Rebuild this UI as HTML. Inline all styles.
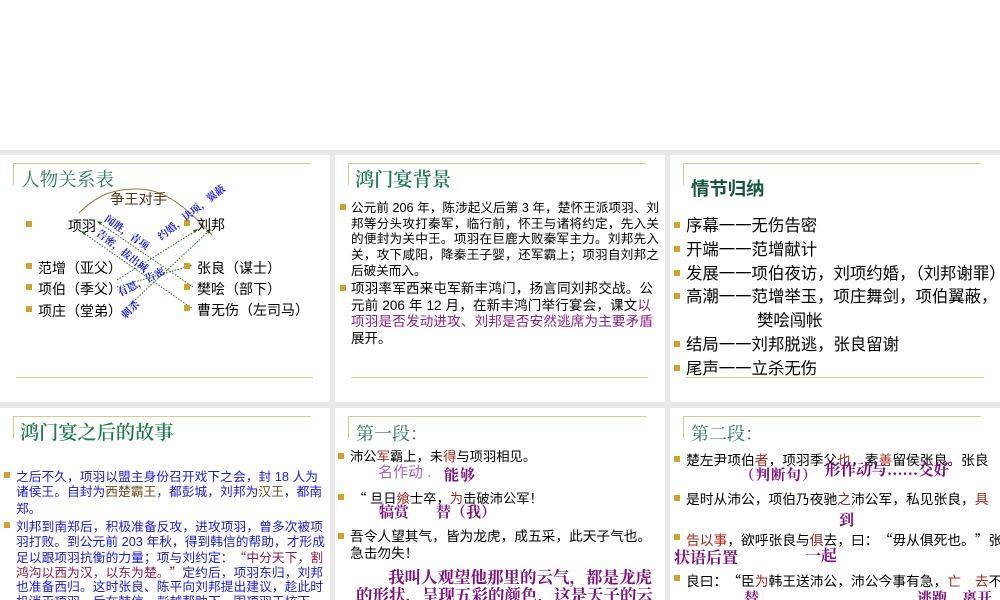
<!DOCTYPE html>
<html lang="zh"><head><meta charset="utf-8">
<style>
html,body{margin:0;padding:0;background:#fff}
#p{position:relative;width:1000px;height:600px;overflow:hidden;background:#fff;font-family:"Liberation Sans","Noto Sans CJK SC",sans-serif;color:#000}
.bg{position:absolute;left:0;top:150px;width:1000px;height:450px;background:#e8e8e8}
.s{position:absolute;background:#fff}
.l{position:absolute;background:#dcc688}
.b{position:absolute;width:6px;height:6px;background:#c9a42e}
.t{position:absolute;height:20px;line-height:20px;white-space:nowrap;margin-top:1px}
.j{text-align:justify;text-align-last:justify;white-space:normal;overflow:hidden}
.q{font-family:"Noto Sans CJK SC",sans-serif}
.ql{display:inline-block;width:1em;text-align:right;text-align-last:right;font-family:"Noto Sans CJK SC",sans-serif}
.qr{display:inline-block;width:1em;text-align:left;text-align-last:left;font-family:"Noto Sans CJK SC",sans-serif}
.h{font-family:"Liberation Serif","Noto Serif CJK SC",serif;color:#2d7d5c;font-size:18.6px;margin-top:2px}
.g{font-family:"Liberation Serif","Noto Serif CJK SC",serif;color:#1c7a4e;font-weight:600;font-size:19.2px;margin-top:2px}
.k{font-family:"Liberation Serif","Noto Serif CJK SC",serif;color:#7d0f80;font-weight:700;font-size:15px;margin-top:2px}
.r{color:#a52a20}.m{color:#8b1a4a}.n{color:#6b4a1e}.pu{color:#8a1f8a}
.a{font-size:14px}.d{font-size:16.4px}.c{font-size:13.4px}
.u{color:#1a1ad0;font-size:12.7px}
.o{position:absolute;font-family:"Liberation Serif","Noto Serif CJK SC",serif;font-size:10.3px;font-weight:700;color:#1c1cd8;white-space:nowrap;line-height:12px;transform-origin:0 50%}
#w{position:absolute;left:0;top:0;width:1000px;height:600px;filter:blur(.3px)}
</style></head><body><div id="p"><div class="bg"></div>
<div id="w">
<div class="s" style="left:0;top:155px;width:330px;height:247px"></div>
<div class="s" style="left:335px;top:155px;width:330px;height:247px"></div>
<div class="s" style="left:670px;top:155px;width:330px;height:247px"></div>
<div class="s" style="left:0;top:408px;width:330px;height:192px"></div>
<div class="s" style="left:335px;top:408px;width:330px;height:192px"></div>
<div class="s" style="left:670px;top:408px;width:330px;height:192px"></div>

<div class="l" style="left:13px;top:163px;width:298px;height:1px"></div><div class="l" style="left:13px;top:163px;width:1px;height:22px"></div><div class="l" style="left:16px;top:377px;width:297px;height:1px"></div>
<div class="l" style="left:348px;top:163px;width:298px;height:1px"></div><div class="l" style="left:348px;top:163px;width:1px;height:22px"></div><div class="l" style="left:351px;top:377px;width:297px;height:1px"></div>
<div class="l" style="left:683px;top:163px;width:298px;height:1px"></div><div class="l" style="left:683px;top:163px;width:1px;height:22px"></div><div class="l" style="left:686px;top:377px;width:298px;height:1px"></div>
<div class="l" style="left:13px;top:416px;width:298px;height:1px"></div><div class="l" style="left:13px;top:416px;width:1px;height:22px"></div>
<div class="l" style="left:348px;top:416px;width:298px;height:1px"></div><div class="l" style="left:348px;top:416px;width:1px;height:22px"></div>
<div class="l" style="left:683px;top:416px;width:298px;height:1px"></div><div class="l" style="left:683px;top:416px;width:1px;height:22px"></div>

<!-- slide 1 -->
<div class="t h" style="left:21px;top:169px">人物关系表</div>
<svg style="position:absolute;left:0;top:150px" width="335" height="255" fill="none">
<path d="M79 63C100 42 118 39 137 39C160 39 180 50 212 85" stroke="#9a7436" stroke-width="1"/>
<g stroke="#2b6d2b" stroke-width="1" stroke-dasharray="1.6 1.4">
<path d="M98 72L193 137"/><path d="M82 82L193 159"/><path d="M117 130L197 80"/><path d="M117 137L190 116"/><path d="M122 162L210 80"/>
</g>
<g fill="#1d611d"><path d="M97 71l5 1-2 3z"/><path d="M81 81l5 1-2 3z"/><path d="M198 79l-5 1 2 3z"/><path d="M192 115l-5-1 1 4z"/><path d="M211 79l-5 2 3 3z"/></g>
</svg>
<div class="t" style="left:110px;top:189px;font-size:14.3px;color:#4e3410">争王对手</div>
<div class="b" style="left:26px;top:221px"></div><div class="b" style="left:26px;top:263px"></div><div class="b" style="left:26px;top:284px"></div><div class="b" style="left:26px;top:306px"></div>
<div class="b" style="left:184px;top:220px"></div><div class="b" style="left:184px;top:263px"></div><div class="b" style="left:184px;top:284px"></div><div class="b" style="left:184px;top:305px"></div>
<div class="t a" style="left:68px;top:215px">项羽</div>
<div class="t a" style="left:38px;top:257px">范增（亚父）</div>
<div class="t a" style="left:38px;top:278px">项伯（季父）</div>
<div class="t a" style="left:38px;top:300px">项庄（堂弟）</div>
<div class="t a" style="left:197px;top:214px">刘邦</div>
<div class="t a" style="left:197px;top:257px">张良（谋士）</div>
<div class="t a" style="left:197px;top:278px">樊哙（部下）</div>
<div class="t a" style="left:197px;top:299px">曹无伤（左司马）</div>
<div class="o" style="left:105px;top:213px;transform:rotate(35deg)">闻胜，青项</div>
<div class="o" style="left:97px;top:227px;transform:rotate(38deg)">告密，拔出城</div>
<div class="o" style="left:160px;top:233px;transform:rotate(-38deg)">约婚，诀项，翼蔽</div>
<div class="o" style="left:119px;top:289px;transform:rotate(-27deg)">有恩，告密</div>
<div class="o" style="left:124px;top:312px;transform:rotate(-45deg)">刺杀</div>

<!-- slide 2 -->
<div class="t g" style="left:355px;top:169px">鸿门宴背景</div>
<div class="b" style="left:340px;top:204px"></div><div class="b" style="left:340px;top:285px"></div>
<div class="t j" style="left:351px;top:197px;width:308px;font-size:12.6px">公元前 206 年，陈涉起义后第 3 年，楚怀王派项羽、刘</div>
<div class="t j" style="left:351px;top:213px;width:308px;font-size:12.6px">邦等分头攻打秦军，临行前，怀王与诸将约定，先入关</div>
<div class="t j" style="left:351px;top:228px;width:308px;font-size:12.6px">的便封为关中王。项羽在巨鹿大败秦军主力。刘邦先入</div>
<div class="t j" style="left:351px;top:244px;width:308px;font-size:12.6px">关，攻下咸阳，降秦王子婴，还军霸上；项羽自刘邦之</div>
<div class="t" style="left:351px;top:260px;font-size:12.6px">后破关而入。</div>
<div class="t j" style="left:351px;top:278px;width:302px;font-size:13.5px">项羽率军西来屯军新丰鸿门，扬言同刘邦交战。公</div>
<div class="t j" style="left:351px;top:295px;width:300px;font-size:13.5px">元前 206 年 12 月，在新丰鸿门举行宴会，课文<span class="pu">以</span></div>
<div class="t j pu" style="left:351px;top:311px;width:302px;font-size:13.5px">项羽是否发动进攻、刘邦是否安然逃席为主要矛盾</div>
<div class="t" style="left:351px;top:328px;font-size:13.5px">展开。</div>

<!-- slide 3 -->
<div class="t" style="left:691px;top:178px;font-size:18.4px;font-weight:700;color:#14573a">情节归纳</div>
<div class="b" style="left:674px;top:222px"></div><div class="b" style="left:674px;top:246px"></div><div class="b" style="left:674px;top:270px"></div><div class="b" style="left:674px;top:293px"></div><div class="b" style="left:674px;top:341px"></div><div class="b" style="left:674px;top:365px"></div>
<div class="t d" style="left:686px;top:215px">序幕一一无伤告密</div>
<div class="t d" style="left:686px;top:239px">开端一一范增献计</div>
<div class="t d" style="left:686px;top:263px">发展一一项伯夜访，刘项约婚，（刘邦谢罪）</div>
<div class="t d" style="left:686px;top:286px">高潮一一范增举玉，项庄舞剑，项伯翼蔽，</div>
<div class="t d" style="left:757px;top:310px">樊哙闯帐</div>
<div class="t d" style="left:686px;top:334px">结局一一刘邦脱逃，张良留谢</div>
<div class="t d" style="left:686px;top:358px">尾声一一立杀无伤</div>

<!-- slide 4 -->
<div class="t g" style="left:20px;top:422px">鸿门宴之后的故事</div>
<div class="b" style="left:4px;top:472px"></div><div class="b" style="left:4px;top:522px"></div>
<div class="t j u" style="left:16px;top:466px;width:302px">之后不久，项羽以盟主身份召开戏下之会，封 18 人为</div>
<div class="t j u" style="left:16px;top:481px;width:306px">诸侯王。自封为<span class="n">西楚霸王</span>，都彭城，刘邦为<span class="n">汉王</span>，都南</div>
<div class="t u" style="left:16px;top:498px">郑。</div>
<div class="t j u" style="left:16px;top:516px;width:307px">刘邦到南郑后，积极准备反攻，进攻项羽，曾多次被项</div>
<div class="t j u" style="left:16px;top:531px;width:309px">羽打败。到公元前 203 年秋，得到韩信的帮助，才形成</div>
<div class="t j u" style="left:16px;top:546px;width:307px">足以跟项羽抗衡的力量；项与刘约定：<span class="m"><span class="ql">“</span>中分天下，割</span></div>
<div class="t j u" style="left:16px;top:561px;width:307px"><span class="m">鸿沟以西为汉，以东为楚。<span class="qr">”</span></span>定约后，项羽东归，刘邦</div>
<div class="t j u" style="left:16px;top:576px;width:307px">也准备西归。这时张良、陈平向刘邦提出建议，趁此时</div>
<div class="t j u" style="left:16px;top:591px;width:307px">机消灭项羽。后在韩信、彭越帮助下，围项羽于垓下。</div>

<!-- slide 5 -->
<div class="t h" style="left:356px;top:422px;font-size:18px">第一段：</div>
<div class="b" style="left:338px;top:453px"></div><div class="b" style="left:338px;top:494px"></div><div class="b" style="left:338px;top:533px"></div>
<div class="t c" style="left:350px;top:446px;font-size:13.3px">沛公<span class="r">军</span>霸上，未<span class="r">得</span>与项羽相见。</div>
<div class="t" style="left:378px;top:462px;font-size:15px;color:#a765bb">名作动 .</div>
<div class="t k" style="left:444px;top:464px;letter-spacing:1px">能够</div>
<div class="t c" style="left:353px;top:487px;font-size:13.3px"><span class="q">“</span> 旦日<span class="r">飨</span>士卒，<span class="r">为</span>击破沛公军！</div>
<div class="t k" style="left:379px;top:501px">犒赏</div>
<div class="t k" style="left:436px;top:501px">替（我）</div>
<div class="t c" style="left:350px;top:526px;font-size:13.7px">吾令人望其气，皆为龙虎，成五采，此天子气也。</div>
<div class="t c" style="left:350px;top:543px;font-size:13.7px">急击勿失！</div>
<div class="t k" style="left:388px;top:566px;font-size:16.5px">我叫人观望他那里的云气，都是龙虎</div>
<div class="t k" style="left:356px;top:584px;font-size:16.5px">的形状，呈现五彩的颜色，这是天子的云</div>

<!-- slide 6 -->
<div class="t h" style="left:691px;top:422px;font-size:18px">第二段：</div>
<div class="b" style="left:674px;top:456px"></div><div class="b" style="left:674px;top:495px"></div><div class="b" style="left:674px;top:534px"></div><div class="b" style="left:674px;top:575px"></div>
<div class="t c" style="left:686px;top:450px;font-size:13.75px">楚左尹项伯<span class="r">者</span>，项羽季父<span class="r">也</span>，素<span class="r">善</span>留侯张良。张良</div>
<div class="t k" style="left:740px;top:464px;letter-spacing:1px;font-size:14.5px">（判断句）</div>
<div class="t k" style="left:825px;top:459px;font-size:15.5px">形作动与……交好</div>
<div class="t c" style="left:686px;top:489px;font-size:13.75px">是时从沛公，项伯乃夜驰<span class="r">之</span>沛公军，私见张良，<span class="r">具</span></div>
<div class="t k" style="left:839px;top:509px">到</div>
<div class="t c" style="left:686px;top:528px;font-size:13.75px"><span class="r">告以事</span>，欲呼张良与<span class="r">俱</span>去，曰：<span class="ql">“</span>毋从俱死也。<span class="qr">”</span>张</div>
<div class="t k" style="left:674px;top:547px;font-size:16px">状语后置</div>
<div class="t k" style="left:805px;top:545px;font-size:16px">一起</div>
<div class="t c" style="left:686px;top:569px;font-size:13.75px">良曰：<span class="ql">“</span>臣<span class="r">为</span>韩王送沛公，沛公今事有急，<span class="r">亡</span>　<span class="r">去</span>不</div>
<div class="t k" style="left:744px;top:587px">替</div>
<div class="t k" style="left:917px;top:587px">逃跑</div>
<div class="t k" style="left:962px;top:587px">离开</div>
</div>
</div></body></html>
